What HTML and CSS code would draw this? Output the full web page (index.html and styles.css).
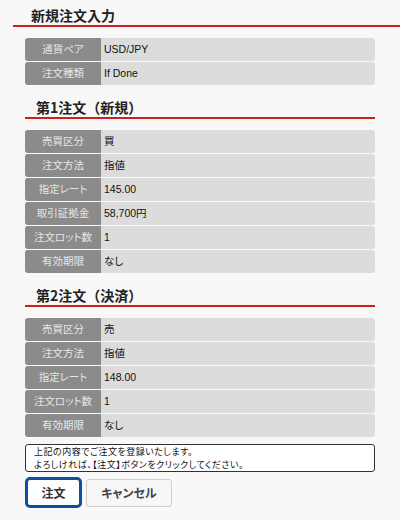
FILE: index.html
```html
<!DOCTYPE html>
<html lang="ja">
<head>
<meta charset="utf-8">
<title>新規注文入力</title>
<link rel="stylesheet" href="styles.css">
</head>
<body>
<div class="page">
  <h1 class="page-title">新規注文入力</h1>
  <div class="content">
    <div class="info">
      <div class="row"><div class="label">通貨ペア</div><div class="value">USD/JPY</div></div>
      <div class="row"><div class="label">注文種類</div><div class="value">If Done</div></div>
    </div>

    <h2 class="section-title">第1注文（新規）</h2>
    <div class="info">
      <div class="row"><div class="label">売買区分</div><div class="value">買</div></div>
      <div class="row"><div class="label">注文方法</div><div class="value">指値</div></div>
      <div class="row"><div class="label">指定レート</div><div class="value">145.00</div></div>
      <div class="row"><div class="label">取引証拠金</div><div class="value">58,700円</div></div>
      <div class="row"><div class="label">注文ロット数</div><div class="value">1</div></div>
      <div class="row"><div class="label">有効期限</div><div class="value">なし</div></div>
    </div>

    <h2 class="section-title">第2注文（決済）</h2>
    <div class="info">
      <div class="row"><div class="label">売買区分</div><div class="value">売</div></div>
      <div class="row"><div class="label">注文方法</div><div class="value">指値</div></div>
      <div class="row"><div class="label">指定レート</div><div class="value">148.00</div></div>
      <div class="row"><div class="label">注文ロット数</div><div class="value">1</div></div>
      <div class="row"><div class="label">有効期限</div><div class="value">なし</div></div>
    </div>

    <div class="notice">上記の内容でご注文を登録いたします。<br>よろしければ、【注文】ボタンをクリックしてください。</div>

    <div class="actions">
      <button class="btn btn-primary" type="button">注文</button>
      <button class="btn btn-cancel" type="button">キャンセル</button>
    </div>
  </div>
</div>
</body>
</html>
```

FILE: styles.css
```css
body {
  margin: 0;
  background: #f8f8f8;
  font-family: "Liberation Sans", "Noto Sans CJK JP", sans-serif;
  color: #111;
}

.page-title {
  margin: 0 0 0 13px;
  padding: 7px 0 2px 18px;
  font-family: "Noto Sans CJK JP", sans-serif;
  font-size: 14px;
  line-height: 16px;
  font-weight: bold;
  color: #222;
  border-bottom: 2px solid #cc1f1f;
}

.content {
  margin: 0 25px;
}

.info {
  margin-top: 11px;
  display: flex;
  flex-direction: column;
  gap: 1px;
}

.row {
  display: flex;
  height: 23px;
  border-radius: 3px;
  overflow: hidden;
  background: #dcdcdc;
}

.label {
  width: 76px;
  flex: none;
  background: #8b8b8b;
  color: #e6e6e6;
  text-align: center;
  font-size: 10.5px;
  line-height: 23px;
  font-feature-settings: "palt";
}

.value {
  padding-left: 3px;
  font-size: 10.5px;
  line-height: 23px;
  color: #111;
  font-feature-settings: "palt";
}

.section-title {
  margin: 14px 0 0;
  padding: 0 0 2px 11px;
  font-family: "Noto Sans CJK JP", sans-serif;
  font-size: 14px;
  line-height: 16px;
  font-weight: bold;
  color: #222;
  border-bottom: 2px solid #cc1f1f;
}

.notice {
  margin-top: 7px;
  padding: 0 8px;
  border: 1px solid #333;
  border-radius: 3px;
  background: #fff;
  font-family: "Noto Sans CJK JP", sans-serif;
  font-size: 9px;
  line-height: 13px;
  letter-spacing: 0.5px;
  color: #111;
  font-feature-settings: "palt";
}

.actions {
  margin-top: 5px;
  display: flex;
  align-items: center;
  gap: 4px;
}

.btn {
  font-family: "Noto Sans CJK JP", sans-serif;
  font-size: 12px;
  font-weight: bold;
  color: #333;
  padding: 0;
  cursor: pointer;
  font-feature-settings: "palt";
}

.btn-primary {
  width: 57px;
  height: 31px;
  border: 3px solid #0d4f9e;
  border-radius: 5px;
  background: #fff;
}

.btn-cancel {
  width: 86px;
  height: 28px;
  border: 1px solid #cfcfcf;
  border-radius: 3px;
  background: #f7f7f7;
  color: #444;
}
```
